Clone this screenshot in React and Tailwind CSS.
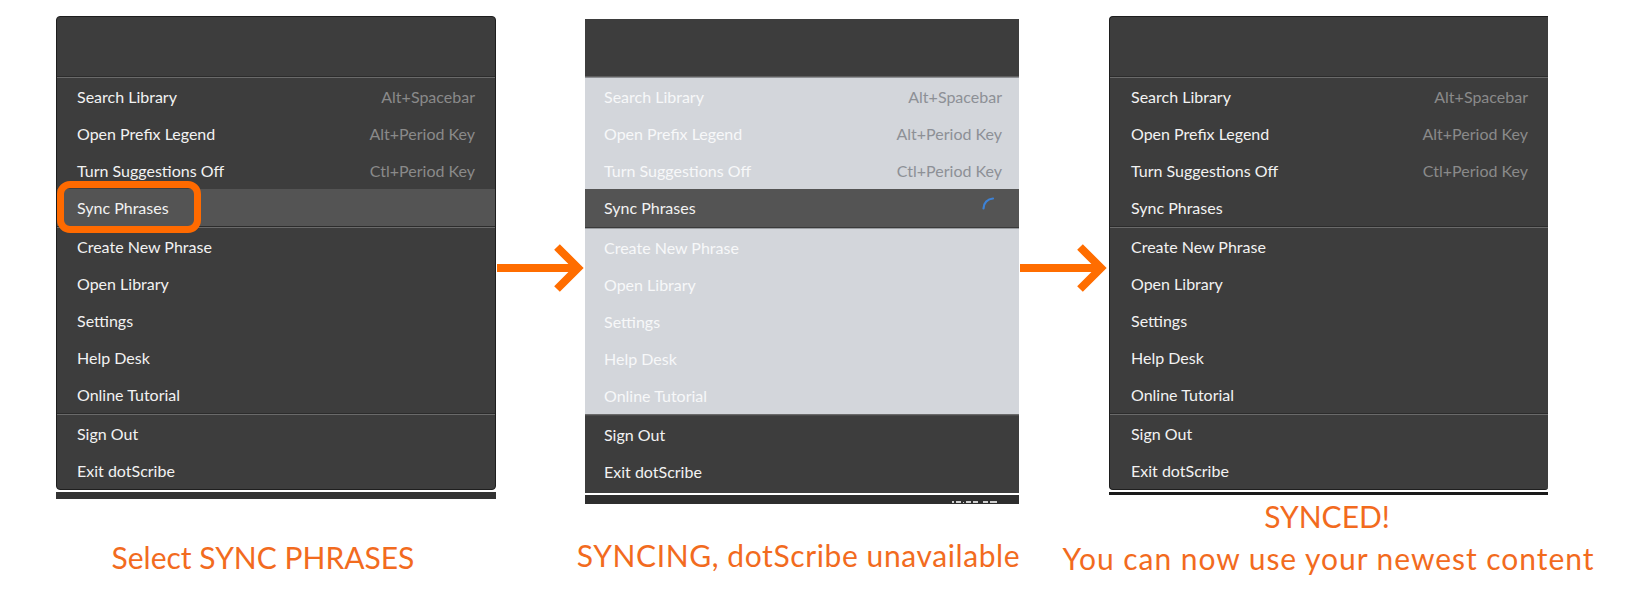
import React from "react";

const FONT = { fontFamily: "Lato, 'Open Sans', sans-serif" };

const top3 = [
  { label: "Search Library", sc: "Alt+Spacebar" },
  { label: "Open Prefix Legend", sc: "Alt+Period Key" },
  { label: "Turn Suggestions Off", sc: "Ctl+Period Key" },
];
const mid = ["Create New Phrase", "Open Library", "Settings", "Help Desk", "Online Tutorial"];
const bottom = ["Sign Out", "Exit dotScribe"];

function Sep({ light }) {
  return light ? (
    <div className="flex flex-col">
      <div className="h-px bg-[#5f5f5f]" />
      <div className="h-px bg-[#8e9094]" />
    </div>
  ) : (
    <div className="flex flex-col">
      <div className="h-px bg-[#2c2c2c]" />
      <div className="h-px bg-[#6a6a6a]" />
    </div>
  );
}

function Row({ label, sc, pad, dim, children, bg }) {
  return (
    <div className={`h-[37px] flex items-center justify-between ${pad} ${bg || ""}`}>
      <span className={`text-[16px] ${dim ? "text-[#f7f8f9]" : "text-[#f2f2f2]"}`}>{label}</span>
      {sc && <span className={`text-[16px] ${dim ? "text-[#8d9096]" : "text-[#8a8a8a]"}`}>{sc}</span>}
      {children}
    </div>
  );
}

function Arrow() {
  return (
    <svg width="90" height="50" viewBox="0 0 90 50" className="mt-[227px] shrink-0">
      <rect x="1" y="21" width="80" height="8" fill="#ff6d00" />
      <polyline points="61,4 82,25 61,46" fill="none" stroke="#ff6d00" strokeWidth="8" strokeLinejoin="miter" strokeMiterlimit="4" />
    </svg>
  );
}

function Spinner() {
  return (
    <svg width="22" height="22" viewBox="0 0 22 22" className="shrink-0">
      <path d="M1.5 11.5 A10 10 0 0 1 11 1.5" fill="none" stroke="#3d82d6" strokeWidth="2.2" strokeLinecap="round" />
    </svg>
  );
}

function Panel1() {
  const pad = "pl-[20px] pr-[20px]";
  return (
    <div className="relative w-[440px]">
      <div className="rounded-[4px] border border-[#1e1e1e] bg-[#3d3d3d] overflow-hidden">
        <div className="h-[59px]" />
        <Sep />
        {top3.map((r) => (
          <Row key={r.label} {...r} pad={pad} />
        ))}
        <Row label="Sync Phrases" pad={pad} bg="bg-[#545454]" />
        <Sep />
        {mid.map((l) => (
          <Row key={l} label={l} pad={pad} />
        ))}
        <Sep />
        {bottom.map((l) => (
          <Row key={l} label={l} pad={pad} />
        ))}
      </div>
      <div className="absolute left-[1px] top-[165px] w-[144px] h-[52px] rounded-[13px] border-[7px] border-[#ff6a00]" />
      <div className="mt-[2px] h-[7px] bg-[#333333]" />
    </div>
  );
}

function Panel2() {
  const pad = "pl-[19px] pr-[17px]";
  return (
    <div className="w-[434px] mt-[3px]">
      <div className="bg-[#3d3d3d] overflow-hidden">
        <div className="h-[57px]" />
        <Sep light />
        <div className="bg-[#d3d6db]">
          {top3.map((r) => (
            <Row key={r.label} {...r} pad={pad} dim />
          ))}
        </div>
        <div className="h-[38px] flex items-center justify-between pl-[19px] pr-[15px] bg-[#545454]">
          <span className="text-[16px] text-[#f2f2f2]">Sync Phrases</span>
          <Spinner />
        </div>
        <div className="flex flex-col">
          <div className="h-px bg-[#3a3a3a]" />
          <div className="h-px bg-[#9a9da1]" />
        </div>
        <div className="bg-[#d3d6db]">
          {mid.map((l) => (
            <Row key={l} label={l} pad={pad} dim />
          ))}
        </div>
        <div className="flex flex-col">
          <div className="h-px bg-[#6a6a6a]" />
          <div className="h-px bg-[#4a4a4a]" />
        </div>
        {bottom.map((l) => (
          <Row key={l} label={l} pad={pad} />
        ))}
        <div className="h-[3px]" />
      </div>
      <div className="mt-[2px] h-[9px] bg-[#2e2e2e] flex justify-end items-end gap-[2px] pr-[22px] pb-[1px]">
        <div className="w-[2px] h-[2px] bg-[#cfcfcf]" />
        <div className="w-[5px] h-[2px] bg-[#cfcfcf]" />
        <div className="w-[1px] h-[1px] bg-[#cfcfcf]" />
        <div className="w-[5px] h-[2px] bg-[#cfcfcf]" />
        <div className="w-[5px] h-[2px] bg-[#cfcfcf] mr-[3px]" />
        <div className="w-[5px] h-[2px] bg-[#cfcfcf]" />
        <div className="w-[7px] h-[2px] bg-[#cfcfcf]" />
      </div>
    </div>
  );
}

function Panel3() {
  const pad = "pl-[21px] pr-[20px]";
  return (
    <div className="w-[439px]">
      <div className="rounded-l-[4px] rounded-br-[3px] border-l border-t border-b border-[#1e1e1e] bg-[#3d3d3d] overflow-hidden">
        <div className="h-[59px]" />
        <Sep />
        {top3.map((r) => (
          <Row key={r.label} {...r} pad={pad} />
        ))}
        <Row label="Sync Phrases" pad={pad} />
        <Sep />
        {mid.map((l) => (
          <Row key={l} label={l} pad={pad} />
        ))}
        <Sep />
        {bottom.map((l) => (
          <Row key={l} label={l} pad={pad} />
        ))}
      </div>
      <div className="mt-[2px] h-[3px] bg-[#1a1a1a]" />
    </div>
  );
}

export default function App() {
  return (
    <div className="w-[1627px] h-[595px] bg-white overflow-hidden" style={FONT}>
      <div className="flex items-start pt-[16px] pl-[56px]">
        <div className="flex flex-col items-center w-[440px]">
          <Panel1 />
          <div className="mt-[38px] mr-[26px] text-[30px] leading-[40px] text-[#f26b1e] whitespace-nowrap">
            Select SYNC PHRASES
          </div>
        </div>
        <div className="w-[89px] flex justify-start">
          <Arrow />
        </div>
        <div className="flex flex-col items-center w-[434px]">
          <Panel2 />
          <div className="mt-[31px] mr-[7px] text-[30px] leading-[40px] tracking-[0.02em] text-[#f26b1e] whitespace-nowrap">
            SYNCING, dotScribe unavailable
          </div>
        </div>
        <div className="w-[90px] flex justify-start">
          <Arrow />
        </div>
        <div className="flex flex-col items-center w-[439px]">
          <Panel3 />
          <div className="text-[30px] leading-[42px] text-[#f26b1e] whitespace-nowrap text-center">
            <div className="-ml-[3px]">SYNCED!</div>
            <div className="tracking-[0.032em]">You can now use your newest content</div>
          </div>
        </div>
      </div>
    </div>
  );
}
